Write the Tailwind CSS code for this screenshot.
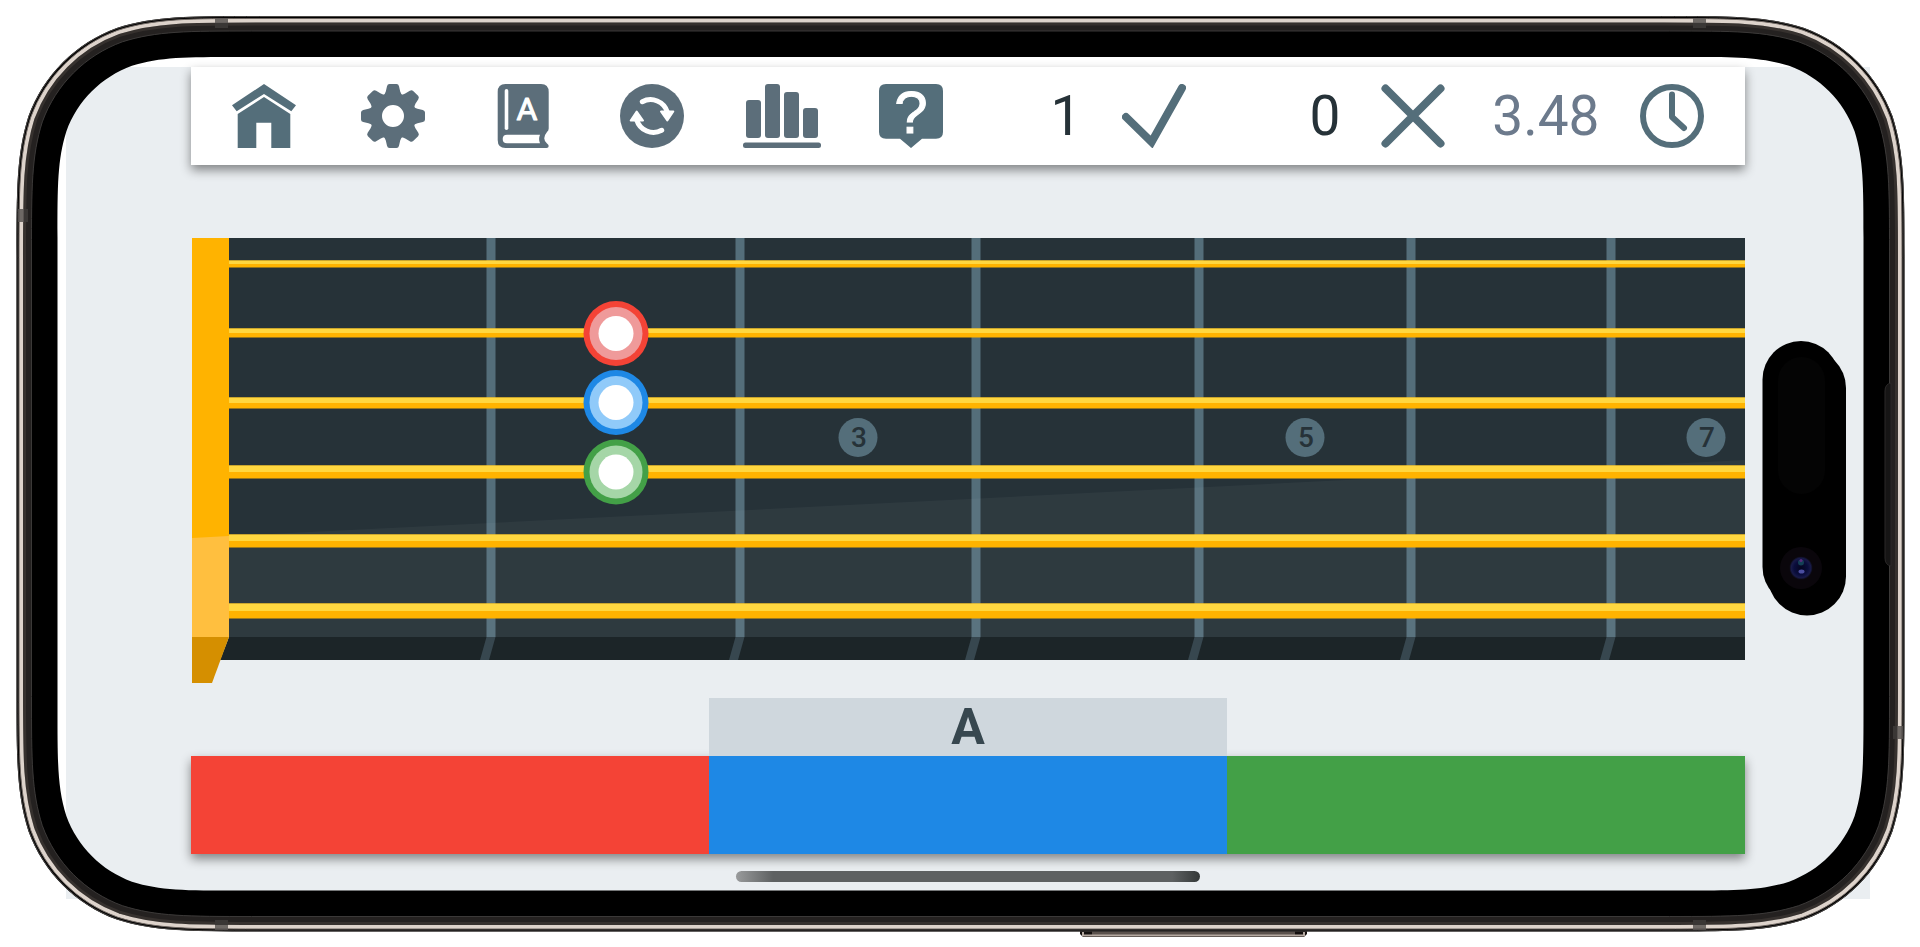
<!DOCTYPE html>
<html lang="en">
<head>
    <meta charset="UTF-8">
    <meta name="viewport" content="width=device-width, initial-scale=1.0">
    <title>Fretboard Trainer</title>
    <script src="https://cdn.jsdelivr.net/npm/@tailwindcss/browser@4"></script>
</head>
<body class="bg-white font-['Roboto',sans-serif]">
    <div class="relative pt-[67px] pb-12 pl-[66px] pr-[50px] overflow-hidden">
        <!-- Screen -->
        <main class="bg-[#eaeef1] px-[125px] pb-[45px]">
            <!-- Toolbar -->
            <header class="grid grid-cols-12 h-[98px] bg-white shadow-[0_5px_10px_rgba(0,0,0,0.45)] text-[55px] leading-none text-[#263238]">
                <button aria-label="Home" class="flex items-center justify-center pl-4 text-[#546e7a]">
                    <svg class="w-16 h-16" viewBox="0 0 64 64" fill="currentColor">
                        <path d="M32 0L64 21.3L59.3 27.3L32 10L4.7 27.3L0 21.3z"></path>
                        <path d="M32 13L58.3 30V64.3H39.3V38.7H24.3V64.3H5.7V30z"></path>
                    </svg>
                </button>
                <button aria-label="Settings" class="flex items-center justify-center pl-4 text-[#5c6e7a]">
                    <svg class="w-16 h-16" viewBox="-32 -32 64 64" fill="currentColor">
                        <defs>
                            <path id="tooth" d="M-10.5 -19.5Q-7.8 -22 -7.2 -24.5L-6 -29.8Q-5.5 -32 -3.5 -32H3.5Q5.5 -32 6 -29.8L7.2 -24.5Q7.8 -22 10.5 -19.5z"></path>
                        </defs>
                        <circle r="16.5" fill="none" stroke="currentColor" stroke-width="11"></circle>
                        <use href="#tooth"></use>
                        <use href="#tooth" transform="rotate(45)"></use>
                        <use href="#tooth" transform="rotate(90)"></use>
                        <use href="#tooth" transform="rotate(135)"></use>
                        <use href="#tooth" transform="rotate(180)"></use>
                        <use href="#tooth" transform="rotate(225)"></use>
                        <use href="#tooth" transform="rotate(270)"></use>
                        <use href="#tooth" transform="rotate(315)"></use>
                    </svg>
                </button>
                <button aria-label="Notes" class="flex items-center justify-center pl-4 text-[#5c6e7a]">
                    <svg class="w-16 h-16" viewBox="0 0 64 64" fill="currentColor">
                        <path d="M14.5 0H50Q57.7 0 57.7 8V44.5Q57.7 46.5 56 48Q50.5 54.5 56 59.5Q57.7 60.5 57.7 62Q57.7 64 55.5 64H14.5Q6.7 64 6.7 56V8Q6.7 0 14.5 0z"></path>
                        <rect x="13.7" y="5" width="3.6" height="41" rx="1.8" fill="#fff"></rect>
                        <path d="M16 50.7H49Q47.2 55 49 59.3H16Q11.7 59.3 11.7 55T16 50.7z" fill="#fff"></path>
                        <text x="36" y="36" font-size="32" text-anchor="middle" fill="#fff" stroke="#fff" stroke-width="1" stroke-linejoin="round">A</text>
                    </svg>
                </button>
                <button aria-label="Restart" class="flex items-center justify-center pl-4 text-[#5c6e7a]">
                    <svg class="w-16 h-16" viewBox="-32 -32 64 64" fill="currentColor">
                        <circle r="32"></circle>
                        <g id="turn" stroke="#fff" stroke-linecap="round" stroke-linejoin="round">
                            <path d="M-9.7 -14.3A17.5 17.5 0 0 1 15.3 -4" fill="none" stroke-width="5"></path>
                            <path d="M9 -4.5H21.3L15.3 4.5z" fill="#fff" stroke-width="2"></path>
                        </g>
                        <use href="#turn" transform="rotate(180)"></use>
                    </svg>
                </button>
                <button aria-label="Statistics" class="flex items-center justify-center pl-4 text-[#5c6e7a]">
                    <svg class="w-[78px] h-16" viewBox="0 0 78 64" fill="currentColor">
                        <rect x="3" y="16" width="15" height="38" rx="3"></rect>
                        <rect x="22" y="0" width="15" height="54" rx="3"></rect>
                        <rect x="41" y="8" width="15" height="46" rx="3"></rect>
                        <rect x="60" y="24" width="15" height="30" rx="3"></rect>
                        <rect x="0" y="58.5" width="78" height="5.5" rx="2.5"></rect>
                    </svg>
                </button>
                <button aria-label="Help" class="flex items-center justify-center pl-4 text-[#546e7a]">
                    <svg class="w-16 h-16 overflow-visible" viewBox="0 0 64 64" fill="currentColor">
                        <path d="M7 0H57Q64 0 64 7V48Q64 54.7 57 54.7H43L32 64L21 54.7H7Q0 54.7 0 48V7Q0 0 7 0z"></path>
                        <text x="32" y="49" font-family="'Liberation Sans', sans-serif" font-size="60" text-anchor="middle" fill="#fff" stroke="#fff" stroke-width="1">?</text>
                    </svg>
                </button>

                <!-- Score -->
                <span class="flex items-center justify-end pr-4">1</span>
                <span class="flex items-center justify-center pr-4 text-[#546e7a]">
                    <svg class="w-16 h-16" viewBox="0 0 64 64" fill="none" stroke="currentColor" stroke-width="8" stroke-linecap="round">
                        <path d="M4 33L29.6 58L60 4"></path>
                    </svg>
                </span>
                <span class="flex items-center justify-end pr-4">0</span>
                <span class="flex items-center justify-center pr-4 text-[#546e7a]">
                    <svg class="w-16 h-16" viewBox="0 0 64 64" fill="none" stroke="currentColor" stroke-width="8" stroke-linecap="round">
                        <path d="M4.5 4.5L59.5 59.5M59.5 4.5L4.5 59.5"></path>
                    </svg>
                </span>
                <span class="flex items-center justify-end pr-4 text-[#6c7a8c]">3.48</span>
                <span class="flex items-center justify-center pr-4 text-[#546e7a]">
                    <svg class="w-16 h-16" viewBox="0 0 64 64" fill="none" stroke="currentColor" stroke-width="6" stroke-linecap="round" stroke-linejoin="round">
                        <circle cx="32" cy="32" r="29"></circle>
                        <path d="M32 10.5V33L44 44"></path>
                    </svg>
                </span>
            </header>

            <!-- Fretboard -->
            <svg id="board" class="block w-full mt-[73px]" viewBox="0 0 1554 445">
                <rect x="38" y="0" width="1516" height="399" fill="#263238"></rect>
                <path d="M38 399H1554V422H29z" fill="#1c2528"></path>
                <g id="frets"></g>
                <g id="marks" font-size="28" font-weight="500" text-anchor="middle"></g>
                <path d="M38 298L1554 222V399H38z" fill="#fff" fill-opacity="0.04"></path>
                <path d="M1 0H38V399H1z" fill="#ffb300"></path>
                <path d="M1 300L38 298V399H1z" fill="#ffbf3f"></path>
                <path d="M1 399H38L21 445H1z" fill="#d58f00"></path>
                <g id="strings"></g>
                <g id="dots"></g>
            </svg>

            <!-- Answers -->
            <div class="grid grid-cols-3 mt-[15px]">
                <div class="col-start-2 flex items-center justify-center h-[58px] bg-[#cfd7dd] text-[50px] leading-none font-bold text-[#37474f]">A</div>
            </div>
            <div class="grid grid-cols-3 h-[98px] shadow-[0_5px_10px_rgba(0,0,0,0.45)]">
                <button aria-label="Red note" class="bg-[#f44336]"></button>
                <button aria-label="Blue note" class="bg-[#1e88e5]"></button>
                <button aria-label="Green note" class="bg-[#43a047]"></button>
            </div>
        </main>

        <!-- Phone frame -->
        <svg id="phone" class="absolute inset-0 w-full h-full pointer-events-none" viewBox="0 0 1920 947" preserveAspectRatio="none" fill="none">
            <defs>
                <linearGradient id="bar">
                    <stop offset="0" stop-color="#999b9c"></stop>
                    <stop offset="0.08" stop-color="#5e6162"></stop>
                    <stop offset="0.94" stop-color="#5e6162"></stop>
                    <stop offset="1" stop-color="#343838"></stop>
                </linearGradient>
                <radialGradient id="lens">
                    <stop offset="0" stop-color="#05051f"></stop>
                    <stop offset="0.6" stop-color="#0a0d3c"></stop>
                    <stop offset="0.85" stop-color="#181a48"></stop>
                    <stop offset="1" stop-color="#0c0a14"></stop>
                </radialGradient>
            </defs>
            <!-- power button -->
            <path d="M1080 930H1307V934L1304 937H1083L1080 934z" fill="#14100f"></path>
            <path d="M1092 930H1295V935H1092z" fill="#5b524d"></path>
            <path d="M1083 932V935.5H1304V932" stroke="#b5a9a1" stroke-width="2"></path>
            <g id="rings"></g>
            <!-- antenna bands -->
            <g fill="#5a5654" fill-opacity="0.85">
                <path d="M215 18H228V23H215zM1693 18H1706V23H1693zM215 925H228V930H215zM1693 925H1706V930H1693z"></path>
                <path d="M18 209H24V222H18zM1897 726H1903V739H1897z"></path>
            </g>
            <g fill="#3a3735">
                <path d="M215 23H228V28H215zM1693 23H1706V28H1693zM215 920H228V925H215zM1693 920H1706V925H1693z"></path>
                <path d="M24 209H28V222H24zM1893 726H1897V739H1893z"></path>
            </g>
            <path d="M1891 383Q1885 384 1885 391V558Q1885 565 1891 566z" fill="#161515" stroke="#2b2929"></path>
            <!-- camera island -->
            <rect x="1762.5" y="341" width="77" height="264.5" rx="38.5" fill="#000"></rect>
            <rect x="1768" y="349" width="78" height="266.5" rx="39" fill="#000"></rect>
            <rect x="1778" y="357" width="47" height="137" rx="23.5" fill="#040404"></rect>
            <circle cx="1801" cy="568" r="21" fill="#0a060b"></circle>
            <circle cx="1801" cy="568" r="11.5" fill="url(#lens)"></circle>
            <circle cx="1801" cy="562.5" r="3" fill="#143f55"></circle>
            <circle cx="1801" cy="560.5" r="1.5" fill="#5c2a7c"></circle>
            <ellipse cx="1801.5" cy="571.5" rx="3" ry="2" fill="#4b4ea0"></ellipse>
            <!-- home indicator -->
            <rect x="736" y="871" width="464" height="11" rx="5.5" fill="url(#bar)"></rect>
        </svg>
    </div>

    <script>
        const fretX = [300, 549, 785, 1008, 1220, 1420];
        const strings = [[26, 7], [95, 9], [165, 11], [234, 13], [303, 13], [373, 15]];
        const marks = [[3, 667], [5, 1114], [7, 1515]];
        const dots = [
            [95.5, '#f44336', '#ef9a9a'],
            [164.5, '#1e88e5', '#90caf9'],
            [234, '#43a047', '#a5d6a7']
        ];

        document.getElementById('frets').innerHTML = fretX.map(x =>
            `<rect x="${x - 4.5}" width="9" height="399" fill="#546e7a"/>
             <path d="M${x - 4.5} 399h9l-6.5 23h-9z" fill="#37474f"/>`).join('');

        document.getElementById('marks').innerHTML = marks.map(([n, x]) =>
            `<circle cx="${x}" cy="199.5" r="19.5" fill="#546e7a"/>
             <text x="${x + 1}" y="209" fill="#263238">${n}</text>`).join('');

        // Each string is amber with a lighter upper half
        document.getElementById('strings').innerHTML = strings.map(([y, h]) =>
            `<rect x="38" y="${y - h / 2}" width="1516" height="${h}" fill="#ffb300"/>
             <rect x="38" y="${y - h / 2}" width="1516" height="${h / 2}" fill="#ffd740"/>`).join('');

        document.getElementById('dots').innerHTML = dots.map(([y, outer, inner]) =>
            `<circle cx="425" cy="${y}" r="32.5" fill="${outer}"/>
             <circle cx="425" cy="${y}" r="26.5" fill="${inner}"/>
             <circle cx="425" cy="${y}" r="17.5" fill="#fff"/>`).join('');

        // Rounded rectangle with smooth corners, inset from the phone's outer edge
        function outline(inset) {
            const l = 16.5 + inset, t = 16 + inset, r = 1904.5 - inset, b = 931.5 - inset;
            const k = 159 - inset;
            const corner = (x, y, sx, sy, flip) => {
                let p = [[1.528, 0], [1.088, 0], [0.868, 0], [0.631, 0.075], [0.372, 0.169], [0.169, 0.372], [0.075, 0.631], [0, 0.868], [0, 1.088], [0, 1.528]];
                if (flip) p = p.reverse();
                const q = p.map(([a, c]) => `${x + sx * a * k} ${y + sy * c * k}`);
                return `${q[0]}C${q.slice(1).join(' ')}`;
            };
            return 'M' + corner(l, t, 1, 1, true) + 'L' + corner(r, t, -1, 1, false) +
                'L' + corner(r, b, -1, -1, true) + 'L' + corner(l, b, 1, -1, false) + 'z';
        }

        const ring = (inset, width, color) =>
            `<path d="${outline(inset)}" stroke="${color}" stroke-width="${width}"/>`;

        document.getElementById('rings').innerHTML =
            `<path d="${outline(0)}${outline(41)}" fill="#000" fill-rule="evenodd"/>` +
            ring(11, 8, '#242120') +
            ring(8, 3, '#36312e') +
            ring(4.5, 4, '#ddd3cb') +
            ring(2.5, 1, '#6d6560') +
            ring(0.5, 1, '#4a4745') +
            ring(15, 1, '#3b3938');
    </script>
</body>
</html>
